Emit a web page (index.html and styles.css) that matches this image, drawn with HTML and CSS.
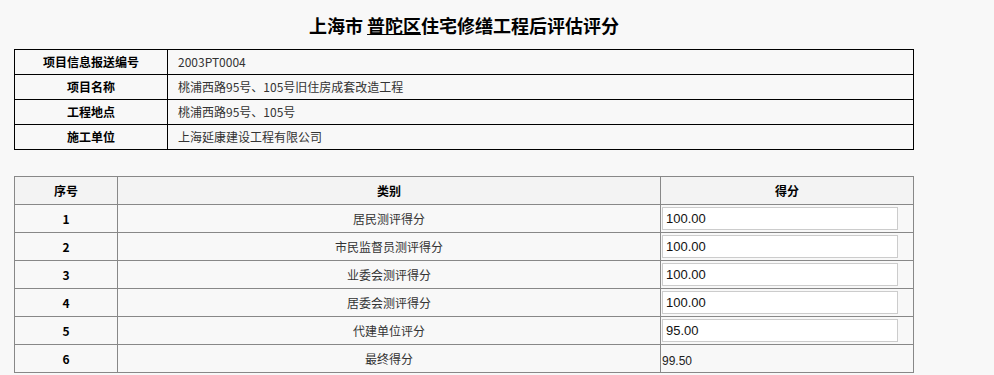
FILE: index.html
```html
<!DOCTYPE html>
<html lang="zh-CN">
<head>
<meta charset="utf-8">
<title>上海市_普陀区住宅修缮工程后评估评分</title>
<link rel="stylesheet" href="styles.css">
</head>
<body>
<div class="page">
  <h1 class="title">上海市 <u class="district">普陀区</u>住宅修缮工程后评估评分</h1>
  <table class="info">
    <colgroup><col class="info-label-col"><col></colgroup>
    <tr><th>项目信息报送编号</th><td>2003PT0004</td></tr>
    <tr><th>项目名称</th><td>桃浦西路95号、105号旧住房成套改造工程</td></tr>
    <tr><th>工程地点</th><td>桃浦西路95号、105号</td></tr>
    <tr><th>施工单位</th><td>上海延康建设工程有限公司</td></tr>
  </table>
  <table class="score">
    <colgroup><col class="c-no"><col class="c-cat"><col class="c-val"></colgroup>
    <thead>
      <tr><th>序号</th><th>类别</th><th>得分</th></tr>
    </thead>
    <tbody>
      <tr><td class="no">1</td><td class="cat">居民测评得分</td><td class="val"><input class="score-input" type="text" value="100.00"></td></tr>
      <tr><td class="no">2</td><td class="cat">市民监督员测评得分</td><td class="val"><input class="score-input" type="text" value="100.00"></td></tr>
      <tr><td class="no">3</td><td class="cat">业委会测评得分</td><td class="val"><input class="score-input" type="text" value="100.00"></td></tr>
      <tr><td class="no">4</td><td class="cat">居委会测评得分</td><td class="val"><input class="score-input" type="text" value="100.00"></td></tr>
      <tr><td class="no">5</td><td class="cat">代建单位评分</td><td class="val"><input class="score-input" type="text" value="95.00"></td></tr>
      <tr><td class="no">6</td><td class="cat">最终得分</td><td class="val final">99.50</td></tr>
    </tbody>
  </table>
</div>
</body>
</html>
```
FILE: styles.css
```css
html, body {
  margin: 0;
  padding: 0;
  background: #f8f8f8;
}
body {
  font-family: "Microsoft YaHei", "Noto Sans CJK SC", sans-serif;
  font-size: 12px;
  color: #333;
}
.page {
  width: 900px;
  padding: 13px 0 0 14px;
}
.title {
  margin: 0 0 12px 0;
  font-size: 18px;
  line-height: 24px;
  font-weight: bold;
  color: #000;
  text-align: center;
}
.district {
  text-decoration: underline;
}
table {
  border-collapse: collapse;
  width: 900px;
  table-layout: fixed;
}
.info {
  border: 1px solid #000;
}
.info th, .info td {
  border: 1px solid #000;
  height: 25px;
  padding: 0 10px;
  box-sizing: border-box;
  line-height: 16px;
  font-size: 12px;
}
.info-label-col {
  width: 153px;
}
.info th {
  font-weight: bold;
  color: #000;
  text-align: center;
}
.info td {
  text-align: left;
  color: #333;
}
.score {
  margin-top: 26px;
  border: 1px solid #888;
}
.c-no { width: 103px; }
.c-val { width: 253px; }
.score th, .score td {
  border: 1px solid #888;
  height: 28px;
  padding: 0;
  box-sizing: border-box;
  line-height: 16px;
  font-size: 12px;
  text-align: center;
}
.score th {
  background: #f3f3f3;
  font-weight: bold;
  color: #000;
}
.score td.no {
  font-weight: bold;
  color: #000;
}
.score td.cat {
  color: #333;
}
.score td.val {
  text-align: left;
  padding-left: 1px;
}
.score-input {
  display: block;
  box-sizing: border-box;
  width: 236px;
  height: 23px;
  margin: 0;
  padding: 0 3px;
  border: 1px solid #ccc;
  background: #fff;
  font-family: "Liberation Sans", Arial, sans-serif;
  font-size: 13px;
  color: #111;
  outline: none;
}
.score td.final {
  font-family: "Liberation Sans", Arial, sans-serif;
  font-size: 12px;
  color: #222;
  padding-left: 1px;
  padding-top: 4px;
}
```
